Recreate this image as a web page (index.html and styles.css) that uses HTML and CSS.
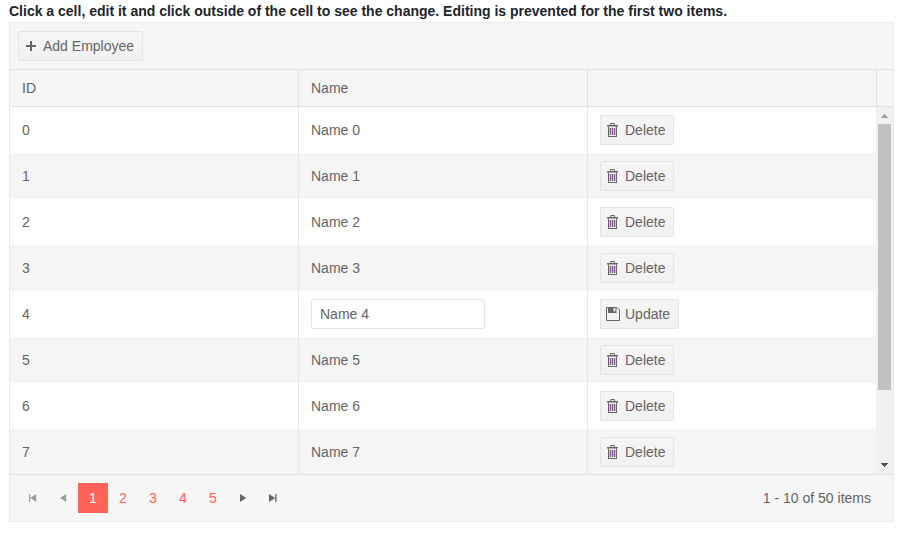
FILE: index.html
```html
<!DOCTYPE html>
<html lang="en">
<head>
<meta charset="utf-8">
<title>Employees</title>
<link rel="stylesheet" href="styles.css">
</head>
<body>
<svg class="defs" width="0" height="0">
  <symbol id="trash" viewBox="0 0 16 16">
    <path fill="#656565" d="M2 3h11v1.600H2zM5.500 1h4l.5 2h-1l-.3-1H6.300L6 3H5z"/>
    <path fill="#656565" d="M3 4.500h1V15H3zM11 4.500h1V15h-1zM3 14h9v1H3z"/>
    <path fill="#85608f" d="M5 6h1v7H5zM7 6h1v7H7zM9 6h1v7H9z"/>
    <path fill="#d3bcd8" d="M4 6h1v7H4zM6 6h1v7H6zM8 6h1v7H8zM10 6h1v7h-1z"/>
  </symbol>
  <symbol id="save" viewBox="0 0 16 16">
    <path fill="none" stroke="#656565" d="M1.500 1.500h10.500l2.500 2.500v10.500h-13z"/>
    <path fill="#656565" d="M3 1h8.500v6H3z"/>
    <path fill="#f2f2f2" d="M8.500 2h2v3.300h-2z"/>
  </symbol>
</svg>
<div class="hint">Click a cell, edit it and click outside of the cell to see the change. Editing is prevented for the first two items.</div>
<main class="grid">
  <div class="toolbar">
    <button class="button"><svg class="icon" viewBox="0 0 16 16"><path fill="#656565" d="M3 7h10v2H3zM7 3h2v10H7z"/></svg>Add Employee</button>
  </div>
  <div class="row header"><div class="cell">ID</div><div class="cell">Name</div><div class="cell"></div><div class="corner"></div></div>
  <div class="content">
    <div class="rows">
      <div class="row"><div class="cell">0</div><div class="cell">Name 0</div><div class="cell"><button class="button"><svg class="icon"><use href="#trash"/></svg>Delete</button></div></div>
      <div class="row"><div class="cell">1</div><div class="cell">Name 1</div><div class="cell"><button class="button"><svg class="icon"><use href="#trash"/></svg>Delete</button></div></div>
      <div class="row"><div class="cell">2</div><div class="cell">Name 2</div><div class="cell"><button class="button"><svg class="icon"><use href="#trash"/></svg>Delete</button></div></div>
      <div class="row"><div class="cell">3</div><div class="cell">Name 3</div><div class="cell"><button class="button"><svg class="icon"><use href="#trash"/></svg>Delete</button></div></div>
      <div class="row"><div class="cell">4</div><div class="cell"><input class="textbox" value="Name 4" aria-label="Name"></div><div class="cell"><button class="button"><svg class="icon"><use href="#save"/></svg>Update</button></div></div>
      <div class="row"><div class="cell">5</div><div class="cell">Name 5</div><div class="cell"><button class="button"><svg class="icon"><use href="#trash"/></svg>Delete</button></div></div>
      <div class="row"><div class="cell">6</div><div class="cell">Name 6</div><div class="cell"><button class="button"><svg class="icon"><use href="#trash"/></svg>Delete</button></div></div>
      <div class="row"><div class="cell">7</div><div class="cell">Name 7</div><div class="cell"><button class="button"><svg class="icon"><use href="#trash"/></svg>Delete</button></div></div>
    </div>
    <div class="scrollbar">
      <svg class="arrow" viewBox="0 0 17 17" shape-rendering="crispEdges"><path fill="#a3a3a3" d="M8 7h1v1H8zM7 8h3v1H7zM6 9h5v1H6zM5 10h7v1H5z"/></svg>
      <div class="thumb"></div>
      <svg class="arrow" viewBox="0 0 17 17" shape-rendering="crispEdges"><path fill="#505050" d="M5 6h7v1H5zM6 7h5v1H6zM7 8h3v1H7zM8 9h1v1H8z"/></svg>
    </div>
  </div>
  <nav class="pager">
    <a class="page nav off"><svg class="icon" viewBox="0 0 16 16"><path d="M4 4h1.200v8H4zM11.200 4v8L5.200 8z"/></svg></a>
    <a class="page nav off"><svg class="icon" viewBox="0 0 16 16"><path d="M11.200 4v8L5 8z"/></svg></a>
    <a class="page current">1</a>
    <a class="page">2</a>
    <a class="page">3</a>
    <a class="page">4</a>
    <a class="page">5</a>
    <a class="page nav"><svg class="icon" viewBox="0 0 16 16"><path d="M5 4v8l6.200-4z"/></svg></a>
    <a class="page nav"><svg class="icon" viewBox="0 0 16 16"><path d="M4 4v8l6.200-4zM10.200 4h1.300v8h-1.300z"/></svg></a>
    <span class="info">1 - 10 of 50 items</span>
  </nav>
</main>
</body>
</html>
```
FILE: styles.css
```css
* { box-sizing: border-box; }
body {
  margin: 0;
  padding: 1px 6px 0 9px;
  background: #fff;
  color: #656565;
  font: 14px/20px "Liberation Sans", Arial, sans-serif;
}
.defs { display: block; }
.hint {
  height: 21px;
  color: #212529;
  font-weight: bold;
  white-space: nowrap;
}
.grid {
  display: flex;
  flex-direction: column;
  width: 885px;
  height: 500px;
  border: 1px solid #ebebeb;
}
.toolbar {
  height: 47px;
  padding: 8px;
  background: #f6f6f6;
  border-bottom: 1px solid #e1e1e1;
}
.button {
  display: inline-flex;
  align-items: center;
  gap: 4px;
  height: 30px;
  padding: 0 8px 0 4px;
  border: 1px solid #e4e4e4;
  border-radius: 2px;
  background: linear-gradient(#f5f5f5, #f1f1f1);
  color: inherit;
  font: inherit;
  vertical-align: top;
}
.icon { display: block; width: 16px; height: 16px; flex: none; }
.row {
  display: grid;
  grid-template-columns: 288px 289px 289px;
  height: 46px;
}
.row:nth-child(even) { background: #f5f5f5; }
.cell {
  display: flex;
  align-items: center;
  padding: 0 12px;
}
.cell + .cell { border-left: 1px solid #e7e7e7; }
.row.header {
  grid-template-columns: 288px 289px 289px 17px;
  height: 37px;
  background: #f6f6f6;
  border-bottom: 1px solid #e1e1e1;
}
.header .cell + .cell, .corner { border-left: 1px solid #e1e1e1; }
.content {
  display: flex;
  height: 367px;
  overflow: hidden;
}
.rows { width: 866px; flex: none; }
.textbox {
  width: 174px;
  height: 30px;
  padding: 0 8px;
  border: 1px solid #e6e6e6;
  border-radius: 2px;
  background: #fff;
  color: inherit;
  font: inherit;
}
.scrollbar {
  display: flex;
  flex-direction: column;
  width: 17px;
  background: #f1f1f1;
}
.arrow { display: block; width: 17px; height: 17px; flex: none; }
.arrow:last-child { margin-top: auto; }
.thumb {
  height: 266px;
  margin: 0 2px;
  background: #c1c1c1;
}
.pager {
  display: flex;
  flex: 1;
  align-items: center;
  padding: 0 22px 0 8px;
  background: #f6f6f6;
  border-top: 1px solid #e1e1e1;
}
.page {
  display: flex;
  align-items: center;
  justify-content: center;
  width: 30px;
  height: 30px;
  color: #ff6358;
}
.page.current { background: #ff6358; color: #fff; }
.page.nav { color: #656565; fill: currentColor; }
.page.off { color: #9c9c9c; }
.info { margin-left: auto; }
```
